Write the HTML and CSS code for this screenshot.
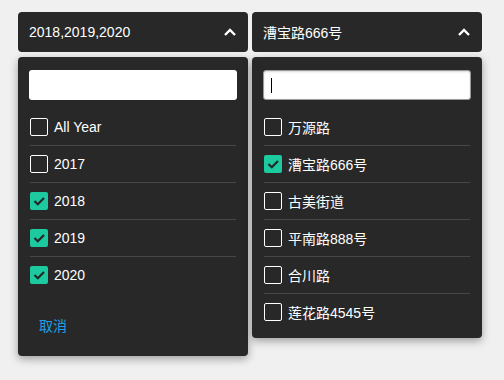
FILE: index.html
```html
<!DOCTYPE html>
<html lang="zh-CN">
<head>
  <meta charset="UTF-8">
  <title>Filters</title>
  <link rel="stylesheet" href="styles.css">
</head>
<body>
  <div id="filters">
    <div class="select">
      <div class="select-head">
        <span>2018,2019,2020</span>
        <svg class="chevron" width="12" height="8" viewBox="0 0 12 8"><path d="M1 7 L6 2 L11 7" fill="none" stroke="#fff" stroke-width="2.4"/></svg>
      </div>
      <div class="panel">
        <div class="search"><input type="text"></div>
        <ul class="options">
          <li><span class="box"></span>All Year</li>
          <li><span class="box"></span>2017</li>
          <li><span class="box checked"><svg width="18" height="18" viewBox="0 0 18 18"><path d="M4.5 9 L7.8 12.3 L14 6" fill="none" stroke="#262626" stroke-width="2.2"/></svg></span>2018</li>
          <li><span class="box checked"><svg width="18" height="18" viewBox="0 0 18 18"><path d="M4.5 9 L7.8 12.3 L14 6" fill="none" stroke="#262626" stroke-width="2.2"/></svg></span>2019</li>
          <li><span class="box checked"><svg width="18" height="18" viewBox="0 0 18 18"><path d="M4.5 9 L7.8 12.3 L14 6" fill="none" stroke="#262626" stroke-width="2.2"/></svg></span>2020</li>
        </ul>
        <div class="panel-foot"><a href="#">取消</a></div>
      </div>
    </div>

    <div class="select">
      <div class="select-head">
        <span>漕宝路666号</span>
        <svg class="chevron" width="12" height="8" viewBox="0 0 12 8"><path d="M1 7 L6 2 L11 7" fill="none" stroke="#fff" stroke-width="2.4"/></svg>
      </div>
      <div class="panel">
        <div class="search focused"><input type="text"><span class="caret"></span></div>
        <ul class="options">
          <li><span class="box"></span>万源路</li>
          <li><span class="box checked"><svg width="18" height="18" viewBox="0 0 18 18"><path d="M4.5 9 L7.8 12.3 L14 6" fill="none" stroke="#262626" stroke-width="2.2"/></svg></span>漕宝路666号</li>
          <li><span class="box"></span>古美街道</li>
          <li><span class="box"></span>平南路888号</li>
          <li><span class="box"></span>合川路</li>
          <li><span class="box"></span>莲花路4545号</li>
        </ul>
      </div>
    </div>
  </div>
</body>
</html>
```

FILE: styles.css
```css
html, body {
  margin: 0;
  padding: 0;
  background: #f0f0f0;
  font-family: "Liberation Sans", "Noto Sans CJK SC", sans-serif;
  font-size: 14px;
  color: #fff;
}
#filters {
  display: flex;
  gap: 4px;
  padding: 12px 18px;
  align-items: flex-start;
}
.select {
  width: 230px;
  display: flex;
  flex-direction: column;
  gap: 5px;
}
.select-head {
  height: 40px;
  background: #282828;
  border-radius: 4px;
  padding: 0 12px 0 11px;
  display: flex;
  align-items: center;
  justify-content: space-between;
  box-sizing: border-box;
}
.chevron {
  margin-top: -1px;
}
.panel {
  background: #282828;
  border-radius: 4px;
  padding: 13px 11px 8px;
  box-shadow: 0 3px 8px rgba(0,0,0,0.35);
}
.search {
  position: relative;
  height: 30px;
}
.search input {
  width: 100%;
  height: 30px;
  box-sizing: border-box;
  border: none;
  border-radius: 3px;
  background: #fff;
  outline: none;
  margin: 0;
  padding: 0 8px;
}
.search.focused input {
  border: 1px solid #9a9a9a;
  box-shadow: inset 0 1px 2px rgba(0,0,0,0.15);
}
.caret {
  position: absolute;
  left: 8px;
  top: 8px;
  width: 1px;
  height: 15px;
  background: #000;
}
.options {
  list-style: none;
  margin: 9px 1px 0;
  padding: 0;
}
.options li {
  height: 36px;
  display: flex;
  align-items: center;
  gap: 6px;
  border-bottom: 1px solid #474747;
}
.options li:last-child {
  border-bottom: none;
}
.box {
  width: 18px;
  height: 18px;
  box-sizing: border-box;
  border: 1px solid #fff;
  border-radius: 2px;
  display: flex;
  flex-shrink: 0;
}
.box.checked {
  border: none;
  background: #1dc99e;
}
.panel-foot {
  padding: 23px 10px 12px;
  line-height: 20px;
}
.panel-foot a {
  color: #1ea0e6;
  text-decoration: none;
}
```
